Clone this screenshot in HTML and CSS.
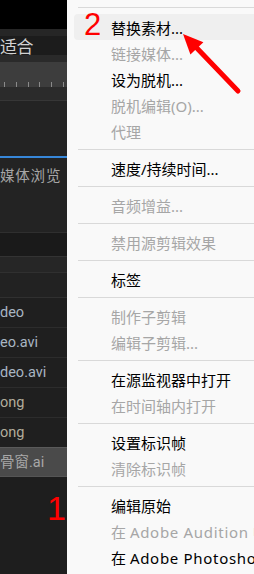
FILE: index.html
```html
<!DOCTYPE html>
<html lang="zh-CN">
<head>
<meta charset="utf-8">
<link rel="stylesheet" href="styles.css">
</head>
<body>
<div class="screen">
  <div class="panel">
    <div class="p-top"></div>
    <div class="p-band b1"></div>
    <div class="p-fit">适合</div>
    <div class="p-band b2"></div>
    <div class="p-ruler"></div>
    <div class="p-band b3"></div>
    <div class="p-area a1"></div>
    <div class="p-blue"></div>
    <div class="p-browser">媒体浏览</div>
    <div class="p-dark"></div>
    <div class="p-band b5"></div>
    <div class="p-head"></div>
    <div class="p-row">deo</div>
    <div class="p-row">eo.avi</div>
    <div class="p-row">deo.avi</div>
    <div class="p-row png">ong</div>
    <div class="p-row png">ong</div>
    <div class="p-row sel">骨窗.ai</div>
    <div class="p-rest"></div>
  </div>
  <div class="menu">
    <div class="sep first"></div>
    <div class="item hl">替换素材...</div>
    <div class="item dis">链接媒体...</div>
    <div class="item">设为脱机...</div>
    <div class="item dis">脱机编辑(O)...</div>
    <div class="item dis">代理</div>
    <div class="sep"></div>
    <div class="item">速度/持续时间...</div>
    <div class="sep"></div>
    <div class="item dis">音频增益...</div>
    <div class="sep"></div>
    <div class="item dis">禁用源剪辑效果</div>
    <div class="sep"></div>
    <div class="item">标签</div>
    <div class="sep"></div>
    <div class="item dis">制作子剪辑</div>
    <div class="item dis">编辑子剪辑...</div>
    <div class="sep"></div>
    <div class="item">在源监视器中打开</div>
    <div class="item dis">在时间轴内打开</div>
    <div class="sep"></div>
    <div class="item">设置标识帧</div>
    <div class="item dis">清除标识帧</div>
    <div class="sep"></div>
    <div class="item">编辑原始</div>
    <div class="item dis">在 <span class="lat">Adobe Audition</span> 中编辑</div>
    <div class="item">在 <span class="lat">Adobe Photoshop</span> 中编辑</div>
  </div>
  <div class="mark mark1">1</div>
  <div class="mark mark2">2</div>
  <svg class="arrow" width="254" height="120" viewBox="0 0 254 120">
    <line x1="238" y1="91" x2="192" y2="43" stroke="#ff0000" stroke-width="5" stroke-linecap="round"/>
    <polygon points="183,34 203.4,42.2 190.4,54.6" fill="#ff0000"/>
  </svg>
</div>
</body>
</html>
```
FILE: styles.css
```css
* { box-sizing: border-box; }
html, body { margin: 0; padding: 0; }
body {
  background: #f9f9f9;
  width: 254px;
  height: 574px;
  overflow: hidden;
  font-family: "Noto Sans", "Noto Sans CJK SC", sans-serif;
}
.screen {
  position: relative;
  display: flex;
  width: 254px;
  height: 574px;
  overflow: hidden;
}
.panel {
  width: 67px;
  flex: none;
  display: flex;
  flex-direction: column;
  background: #1e1e1e;
  overflow: hidden;
  white-space: nowrap;
}
.p-top { height: 29px; background: #000; }
.p-band { flex: none; }
.b1 { height: 7px; background: #262626; }
.b2 { height: 7px; background: #2a2a2a; }
.b3 { height: 14px; background: #2b2b2b; border-bottom: 1px solid #363636; }
.b5 { height: 16px; background: #262626; border-bottom: 1px solid #303030; }
.p-fit {
  height: 19px;
  background: #1c1c1c;
  color: #d2d2d2;
  font-family: "Noto Sans CJK SC", sans-serif;
  font-size: 17px;
  line-height: 19px;
  letter-spacing: -0.5px;
}
.p-ruler {
  height: 25px;
  background-color: #3d3d3d;
  background-image: repeating-linear-gradient(to right, #8a8a8a 0 1px, transparent 1px 11.8px);
  background-size: 100% 5px;
  background-position: 4px 20px;
  background-repeat: no-repeat;
}
.p-area.a1 { height: 55px; background: #232323; }
.p-blue { height: 2px; background: #3787d9; }
.p-browser {
  height: 75px;
  background: #232323;
  border-bottom: 1px solid #2f2f2f;
  color: #a6a6a6;
  font-family: "Noto Sans CJK SC", sans-serif;
  font-size: 14.5px;
  line-height: 18px;
  padding-top: 8px;
  letter-spacing: 0.8px;
}
.p-dark { height: 24px; background: #1a1a1a; border-bottom: 1px solid #333; }
.p-head { height: 25px; background: #222; border-bottom: 1px solid #303030; }
.p-row {
  height: 30px;
  background: #1f1f1f;
  border-bottom: 1px solid #2c2c2c;
  color: #a9b6c3;
  font-family: Roboto, "Noto Sans CJK SC", sans-serif;
  font-size: 14.5px;
  line-height: 29px;
}
.p-row.png { color: #b3ad9c; }
.p-row.sel {
  background: #4a4a4a;
  border-top: 1px solid #5a5a5a;
  border-bottom: 1px solid #555;
  color: #a8a8a8;
  margin-top: -1px;
}
.p-rest { flex: 1; background: #1e1e1e; }

.menu {
  flex: 1;
  min-width: 0;
  padding-top: 2px;
  background: #f9f9f9;
}
.sep {
  height: 11px;
  margin-left: 11px;
  padding-top: 5px;
}
.sep::after {
  content: "";
  display: block;
  height: 1px;
  background: #d9d9d9;
}
.sep.first { height: 12px; }
.item {
  height: 26px;
  margin-left: 7px;
  padding-left: 37px;
  padding-top: 1px;
  line-height: 26px;
  font-size: 15px;
  color: #000;
  white-space: nowrap;
  overflow: hidden;
  border-radius: 4px 0 0 4px;
}
.item.dis { color: #a6a6a6; }
.item.hl { background: #efefef; }
.lat { letter-spacing: 0.7px; }

.mark {
  position: absolute;
  color: #ff0000;
  font-family: "Liberation Sans", Arial, sans-serif;
  line-height: 1;
}
.mark1 { left: 47px; top: 491px; font-size: 34px; }
.mark2 { left: 84px; top: 9px; font-size: 31px; }
.arrow { position: absolute; left: 0; top: 0; }
```
